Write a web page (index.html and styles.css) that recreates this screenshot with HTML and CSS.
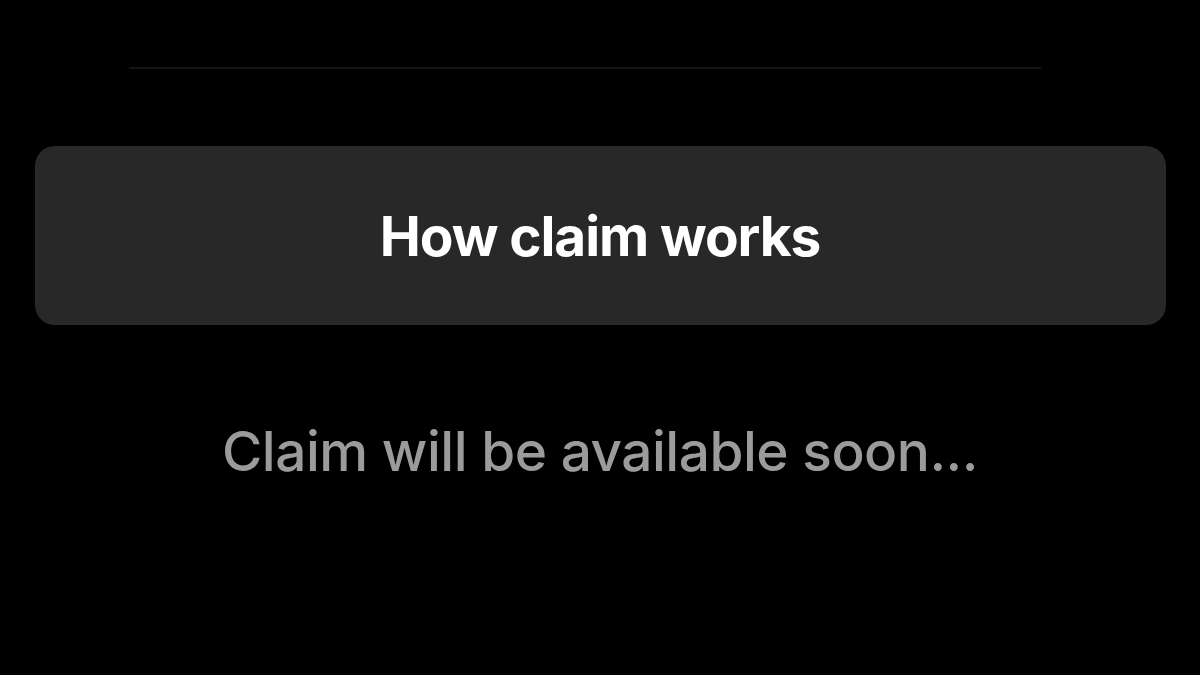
FILE: index.html
```html
<!DOCTYPE html>
<html>
<head>
<meta charset="utf-8">
<link rel="stylesheet" href="styles.css">
</head>
<body>
<div class="page">
  <div class="divider"></div>
  <button class="how-btn">How claim works</button>
  <p class="soon">Claim will be available soon...</p>
</div>
</body>
</html>
```
FILE: styles.css
```css
html, body {
  margin: 0;
  padding: 0;
  background: #000;
  width: 1200px;
  height: 675px;
  overflow: hidden;
}
.page {
  display: flex;
  flex-direction: column;
  align-items: center;
  padding: 67px 35px 0;
  font-family: Inter, "Noto Sans", sans-serif;
}
.divider {
  width: 912px;
  height: 2px;
  background: #141414;
  margin-left: -30px;
}
.how-btn {
  margin-top: 77px;
  width: 1131px;
  height: 179px;
  border: none;
  border-radius: 20px;
  background: #282828;
  color: #fff;
  font-family: Inter, "Noto Sans", sans-serif;
  font-weight: 700;
  font-size: 55px;
  letter-spacing: -1.1px;
  padding: 0;
  padding-bottom: 0;
}
.soon {
  margin: 94px 0 0;
  color: #9b9b9b;
  font-weight: 500;
  font-size: 55px;
  letter-spacing: -0.5px;
  line-height: 64px;
}
```
